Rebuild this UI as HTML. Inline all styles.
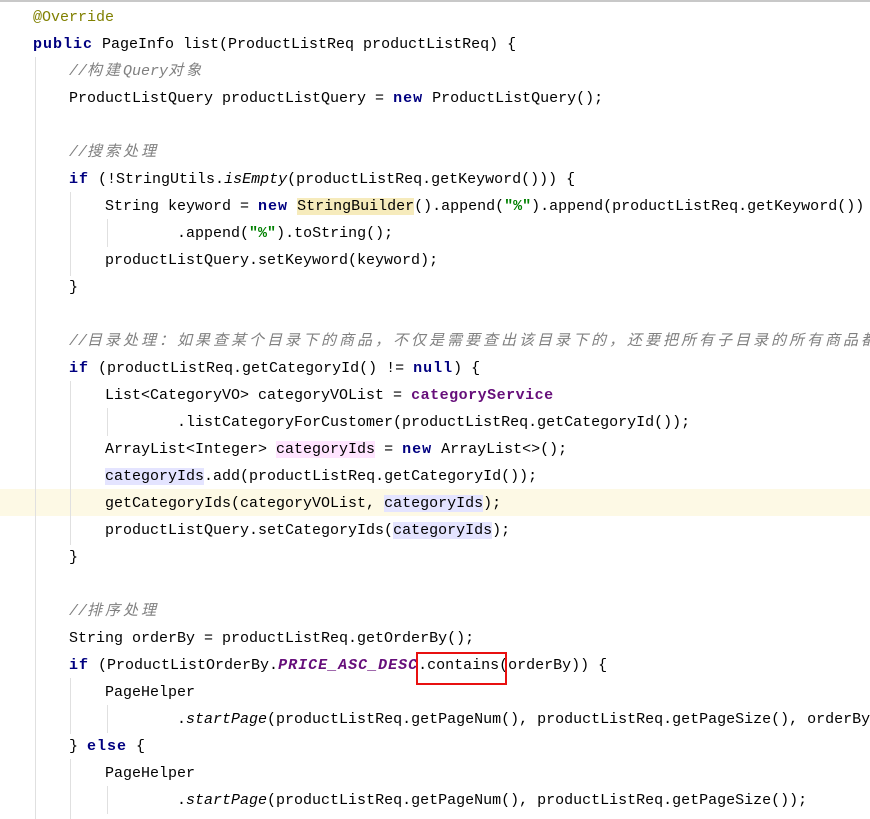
<!DOCTYPE html>
<html><head><meta charset="utf-8"><style>
body{margin:0;width:870px;height:819px;overflow:hidden;background:#fff;position:relative}
.top{position:absolute;left:0;top:0;width:870px;height:2px;background:#c8c8c8}
.code{position:absolute;left:33px;top:4px;font-family:"Liberation Mono","Noto Sans CJK SC",monospace;font-size:15px;color:#000}
.l{height:27px;line-height:27px;white-space:pre}
.hl{position:absolute;left:0;top:489px;width:870px;height:27px;background:#fdf9e5}
.k{color:#000080;font-weight:bold;letter-spacing:1px}
.c{color:#808080;font-style:italic}
.cj{letter-spacing:3px}
.s{color:#008000;font-weight:bold}
.f{color:#660e7a;font-weight:bold;letter-spacing:0.5px}
.fi{color:#660e7a;font-weight:bold;font-style:italic;letter-spacing:1px}
.i{font-style:italic}
.a{color:#808000}
.sb{background:#f6ebbc}
.pk{background:#ffe4ff}
.bl{background:#e4e4ff}
.g{position:absolute;width:1px;background:#e0e0e0}
.box{position:absolute;left:416px;top:652px;width:87px;height:29px;border:2px solid #e81010}
</style></head><body>
<div class="top"></div>
<div class="hl"></div>
<div class="g" style="left:35px;top:57px;height:762px"></div>
<div class="g" style="left:70px;top:192px;height:84px"></div>
<div class="g" style="left:70px;top:381px;height:164px"></div>
<div class="g" style="left:70px;top:678px;height:56px"></div>
<div class="g" style="left:70px;top:759px;height:60px"></div>
<div class="g" style="left:107px;top:219px;height:28px"></div>
<div class="g" style="left:107px;top:408px;height:28px"></div>
<div class="g" style="left:107px;top:705px;height:28px"></div>
<div class="g" style="left:107px;top:786px;height:28px"></div>
<div class="code"><div class="l"><span class="a">@Override</span></div><div class="l"><span class="k">public</span> PageInfo list(ProductListReq productListReq) {</div><div class="l">    <span class="c">//<span class="cj">构建</span>Query<span class="cj">对象</span></span></div><div class="l">    ProductListQuery productListQuery = <span class="k">new</span> ProductListQuery();</div><div class="l"> </div><div class="l">    <span class="c">//<span class="cj">搜索处理</span></span></div><div class="l">    <span class="k">if</span> (!StringUtils.<span class="i">isEmpty</span>(productListReq.getKeyword())) {</div><div class="l">        String keyword = <span class="k">new</span> <span class="sb">StringBuilder</span>().append(<span class="s">"%"</span>).append(productListReq.getKeyword())</div><div class="l">                .append(<span class="s">"%"</span>).toString();</div><div class="l">        productListQuery.setKeyword(keyword);</div><div class="l">    }</div><div class="l"> </div><div class="l">    <span class="c">//<span class="cj">目录处理：如果查某个目录下的商品，不仅是需要查出该目录下的，还要把所有子目录的所有商品都</span></span></div><div class="l">    <span class="k">if</span> (productListReq.getCategoryId() != <span class="k">null</span>) {</div><div class="l">        List&lt;CategoryVO&gt; categoryVOList = <span class="f">categoryService</span></div><div class="l">                .listCategoryForCustomer(productListReq.getCategoryId());</div><div class="l">        ArrayList&lt;Integer&gt; <span class="pk">categoryIds</span> = <span class="k">new</span> ArrayList&lt;&gt;();</div><div class="l">        <span class="bl">categoryIds</span>.add(productListReq.getCategoryId());</div><div class="l">        getCategoryIds(categoryVOList, <span class="bl">categoryIds</span>);</div><div class="l">        productListQuery.setCategoryIds(<span class="bl">categoryIds</span>);</div><div class="l">    }</div><div class="l"> </div><div class="l">    <span class="c">//<span class="cj">排序处理</span></span></div><div class="l">    String orderBy = productListReq.getOrderBy();</div><div class="l">    <span class="k">if</span> (ProductListOrderBy.<span class="fi">PRICE_ASC_DESC</span>.contains(orderBy)) {</div><div class="l">        PageHelper</div><div class="l">                .<span class="i">startPage</span>(productListReq.getPageNum(), productListReq.getPageSize(), orderBy);</div><div class="l">    } <span class="k">else</span> {</div><div class="l">        PageHelper</div><div class="l">                .<span class="i">startPage</span>(productListReq.getPageNum(), productListReq.getPageSize());</div></div>
<div class="box"></div>
</body></html>
